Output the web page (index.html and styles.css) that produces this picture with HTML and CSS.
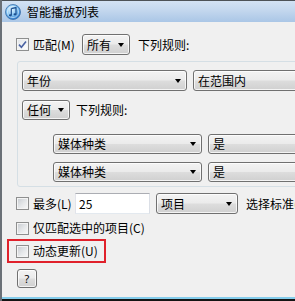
FILE: index.html
```html
<!DOCTYPE html>
<html lang="zh-CN">
<head>
<meta charset="utf-8">
<title>智能播放列表</title>
<link rel="stylesheet" href="styles.css">
</head>
<body>
<div class="window">
  <div class="titlebar">
    <svg class="app-icon" width="16" height="16" viewBox="0 0 16 16">
      <defs>
        <radialGradient id="ig" cx="0.4" cy="0.35" r="0.7">
          <stop offset="0" stop-color="#e8f6ff"/>
          <stop offset="0.55" stop-color="#7cc0f2"/>
          <stop offset="1" stop-color="#1f6cc4"/>
        </radialGradient>
      </defs>
      <circle cx="8" cy="8" r="7.5" fill="url(#ig)" stroke="#3a6ea8" stroke-width="0.8"/>
      <circle cx="8" cy="8" r="5.6" fill="none" stroke="#ffffff" stroke-opacity="0.6" stroke-width="0.8"/>
      <path d="M6.3 4.6 L11 3.6 V10.2" fill="none" stroke="#1d4f8f" stroke-width="1.2"/>
      <path d="M6.3 4.6 V11.2" fill="none" stroke="#1d4f8f" stroke-width="1.2"/>
      <ellipse cx="5.3" cy="11.3" rx="1.5" ry="1.1" fill="#1d4f8f"/>
      <ellipse cx="10" cy="10.3" rx="1.5" ry="1.1" fill="#1d4f8f"/>
    </svg>
    <span class="title">智能播放列表</span>
  </div>
  <div class="client">
    <div class="row row-match">
      <label class="check lbl-match"><span class="cb cb-checked"><svg width="9" height="9" viewBox="0 0 9 9"><path d="M1 4.6 L3.4 7.2 L8 1.4" fill="none" stroke="#4a62a3" stroke-width="1.6"/></svg></span><span>匹配(M)</span></label>
      <div class="combo w-small"><span class="txt">所有</span><i class="arrow"></i></div>
      <span class="after-small">下列规则:</span>
    </div>

    <div class="group">
      <div class="rule">
        <div class="combo w-field1"><span class="txt">年份</span><i class="arrow"></i></div>
        <div class="combo w-op"><span class="txt">在范围内</span></div>
      </div>
      <div class="row row-any">
        <div class="combo w-small h20"><span class="txt">任何</span><i class="arrow"></i></div>
        <span class="after-any">下列规则:</span>
      </div>
      <div class="subrules">
        <div class="rule">
          <div class="combo w-field2 h20"><span class="txt">媒体种类</span><i class="arrow"></i></div>
          <div class="combo w-op h20"><span class="txt">是</span></div>
        </div>
        <div class="rule">
          <div class="combo w-field2 h20"><span class="txt">媒体种类</span><i class="arrow"></i></div>
          <div class="combo w-op h20"><span class="txt">是</span></div>
        </div>
      </div>
    </div>

    <div class="row row-limit">
      <label class="check lbl-limit"><span class="cb"></span><span>最多(L)</span></label>
      <div class="input">25</div>
      <div class="combo w-unit"><span class="txt">项目</span><i class="arrow"></i></div>
      <span class="after-unit">选择标准(</span>
    </div>

    <div class="row row-only">
      <label class="check"><span class="cb"></span><span>仅匹配选中的项目(C)</span></label>
    </div>

    <div class="highlight">
      <label class="check"><span class="cb"></span><span>动态更新(U)</span></label>
    </div>

    <button class="help" type="button">?</button>
  </div>
  <div class="frame-bottom"></div>
</div>
</body>
</html>
```

FILE: styles.css
```css
* { box-sizing: border-box; }
html, body { margin: 0; padding: 0; }
body {
  width: 295px;
  height: 301px;
  overflow: hidden;
  background: #f0f0f0;
  font-family: "Noto Sans CJK SC", "Noto Sans", sans-serif;
  font-size: 12px;
  line-height: 16px;
  color: #000;
}
.window {
  width: 420px;
  height: 301px;
  display: flex;
  flex-direction: column;
  border-left: 2px solid #6a7077;
}
.titlebar {
  height: 22px;
  flex: none;
  display: flex;
  align-items: center;
  border-top: 1px solid #4d5257;
  background: linear-gradient(#d3e2f3 0%, #c3d7ee 45%, #aac6e6 100%);
  padding-left: 3px;
}
.app-icon { flex: none; }
.title {
  margin-left: 6px;
  font-size: 12px;
  color: #000;
}
.client {
  flex: 1;
  padding-left: 14px;
  display: flex;
  flex-direction: column;
  align-items: flex-start;
}
.row {
  display: flex;
  align-items: center;
}
.check {
  display: flex;
  align-items: center;
  white-space: nowrap;
}
.cb {
  width: 13px;
  height: 13px;
  flex: none;
  border: 1px solid #8e8f8f;
  background: linear-gradient(135deg, #c6cacf 0%, #e6e8ea 55%, #f9f9f9 100%);
  box-shadow: inset 0 0 0 1px #f4f4f4;
  margin-right: 4px;
  display: flex;
  align-items: center;
  justify-content: center;
}
.cb-checked {
  background: linear-gradient(135deg, #dfe3e8 0%, #f4f5f6 60%, #ffffff 100%);
}
.cb svg { display: block; }

.combo {
  height: 21px;
  flex: none;
  display: flex;
  align-items: center;
  border: 1px solid #707070;
  border-radius: 3px;
  background: linear-gradient(#f3f3f3 0%, #ebebeb 48%, #dddddd 52%, #d0d0d0 100%);
  box-shadow: inset 0 0 0 1px rgba(255,255,255,0.75);
  padding-left: 4px;
  padding-right: 5px;
  white-space: nowrap;
}
.combo .txt { flex: 1; }
.h20 { height: 20px; }
.arrow {
  width: 0;
  height: 0;
  border-left: 3.5px solid transparent;
  border-right: 3.5px solid transparent;
  border-top: 4px solid #000;
}

.row-match { margin-top: 12px; height: 21px; }
.lbl-match { width: 66px; }
.w-small { width: 48px; }
.after-small { margin-left: 8px; }

.group {
  margin-top: 6px;
  margin-left: 1px;
  width: 400px;
  border: 1px solid #d5dfe5;
  border-radius: 3px;
  padding: 8px 0 4px 4px;
  display: flex;
  flex-direction: column;
}
.rule { display: flex; gap: 6px; }
.w-field1 { width: 165px; }
.w-field2 { width: 149px; }
.w-op { width: 200px; }
.row-any { margin-top: 9px; }
.after-any { margin-left: 6px; }
.subrules {
  margin-top: 14px;
  margin-left: 31px;
  display: flex;
  flex-direction: column;
  gap: 8px;
}

.row-limit { margin-top: 6px; height: 21px; }
.lbl-limit { width: 59px; }
.input {
  width: 75px;
  height: 21px;
  background: #fff;
  border: 1px solid #abadb3;
  border-color: #abadb3 #dbdfe6 #e3e9ef #e2e3ea;
  padding-left: 3px;
  display: flex;
  align-items: center;
}
.w-unit { width: 82px; margin-left: 6px; }
.after-unit { margin-left: 8px; white-space: nowrap; }

.row-only { margin-top: 6px; height: 16px; }

.highlight {
  margin-top: 3px;
  margin-left: -9px;
  width: 99px;
  height: 24px;
  border: 2px solid #e0212b;
  padding-left: 7px;
  display: flex;
  align-items: center;
}

.help {
  margin-top: 6px;
  margin-left: 1px;
  width: 20px;
  height: 19px;
  padding: 0;
  border: 1px solid #707070;
  border-radius: 3px;
  background: linear-gradient(#f3f3f3 0%, #ebebeb 48%, #dddddd 52%, #d0d0d0 100%);
  box-shadow: inset 0 0 0 1px rgba(255,255,255,0.75);
  font-family: "Noto Sans", sans-serif;
  font-size: 11px;
  line-height: 16px;
  color: #000;
}

.frame-bottom {
  height: 4px;
  flex: none;
  border-top: 2px solid #84cdec;
  background: #141414;
}
```
